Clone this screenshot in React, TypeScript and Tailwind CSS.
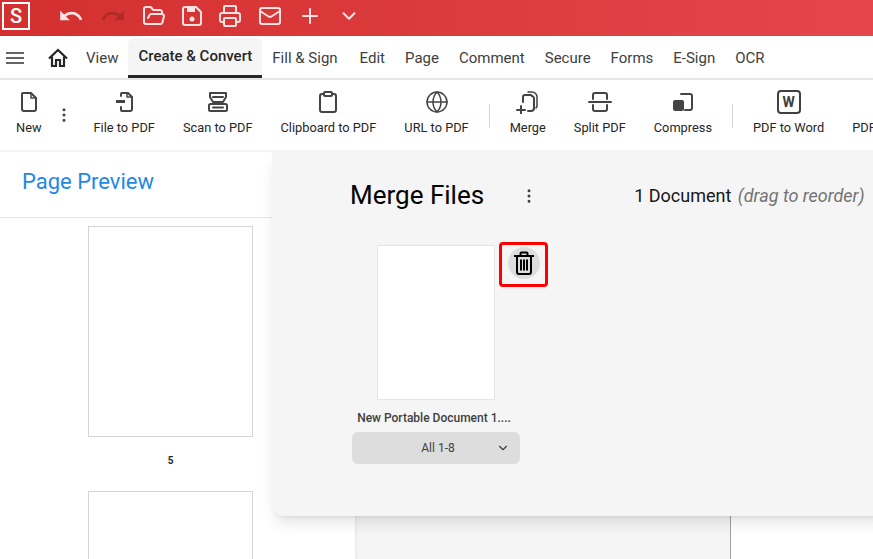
import type { ReactNode } from 'react';
import { ChevronDown, Clipboard, FolderOpen, Globe, Mail, MoreVertical, Plus, Printer } from 'lucide-react';
import { MdRedo, MdUndo } from 'react-icons/md';

const TABS = ['Fill & Sign', 'Edit', 'Page', 'Comment', 'Secure', 'Forms', 'E-Sign', 'OCR'];

function Svg({ children }: { children: ReactNode }) {
  return (
    <svg width="24" height="24" viewBox="0 0 24 24" fill="none" stroke="#444" strokeWidth="2" strokeLinejoin="round" strokeLinecap="round">
      {children}
    </svg>
  );
}

const NewIcon = () => (
  <Svg>
    <path d="M6 3h8l5 5v11a2 2 0 0 1-2 2H7a2 2 0 0 1-2-2V4a1 1 0 0 1 1-1z" />
    <path d="M14 3v5h5" strokeWidth="1.5" />
  </Svg>
);
const FileToPdfIcon = () => (
  <Svg>
    <path d="M9 6V4a1 1 0 0 1 1-1h6l4 4v12a2 2 0 0 1-2 2h-8a1 1 0 0 1-1-1v-3" />
    <path d="M4 11.5h9" strokeWidth="3" strokeLinecap="butt" />
    <path d="M15 3v4h5" strokeWidth="1.5" />
  </Svg>
);
const ScanIcon = () => (
  <Svg>
    <path d="M4 3h16v4l-3 5H7L4 7z" />
    <path d="M7 7h10" />
    <rect x="3" y="14" width="18" height="7" rx="1.5" />
    <path d="M7 17.5h10" />
  </Svg>
);
const MergeIcon = () => (
  <Svg>
    <path d="M7 12V7a2 2 0 0 1 2-2h6l1 1a3 3 0 0 1 2 2v10a3 3 0 0 1-3 3h-3" />
    <path d="M12 2h4a5 5 0 0 1 5 5v9a4 4 0 0 1-1 2" strokeWidth="1.5" />
    <path d="M1 20h8M5 16v8" />
  </Svg>
);
const SplitIcon = () => (
  <Svg>
    <path d="M5 9V5a2 2 0 0 1 2-2h10a2 2 0 0 1 2 2v4" />
    <path d="M1 12h22" />
    <path d="M5 15v4a2 2 0 0 0 2 2h10a2 2 0 0 0 2-2v-4" />
  </Svg>
);
const CompressIcon = () => (
  <Svg>
    <path d="M10 4h9a2 2 0 0 1 2 2v12a2 2 0 0 1-2 2h-5" />
    <rect x="2" y="10" width="11" height="11" rx="2" fill="#444" stroke="none" />
  </Svg>
);
const WordIcon = () => (
  <div className="flex h-6 w-6 items-center justify-center rounded-sm border-2 border-neutral-700 text-sm font-bold leading-none text-neutral-700">
    W
  </div>
);

const SaveIcon = () => (
  <svg width="20" height="20" viewBox="0 0 20 20" fill="none" stroke="currentColor" strokeWidth="2" strokeLinejoin="round">
    <path d="M3 1h11l5 5v11a2 2 0 0 1-2 2H3a2 2 0 0 1-2-2V3a2 2 0 0 1 2-2z" />
    <path d="M5 2h8v4H5z" fill="currentColor" stroke="none" />
    <circle cx="10" cy="13" r="2.5" fill="currentColor" stroke="none" />
  </svg>
);

const HamburgerIcon = () => (
  <svg width="18" height="12" viewBox="0 0 18 12" fill="none" stroke="#333" strokeWidth="1.6">
    <path d="M0 1h18M0 6h18M0 11h18" />
  </svg>
);

const HomeIcon = () => (
  <svg width="20" height="20" viewBox="0 0 20 20" fill="none" stroke="#262626" strokeWidth="2.2" strokeLinejoin="miter">
    <path d="M1 10.5 10 2l9 8.5" />
    <path d="M4 8.5V18h4v-6h4v6h4V8.5" />
  </svg>
);

const TrashIcon = () => (
  <svg width="20" height="24" viewBox="0 0 20 24" fill="none" stroke="#000" strokeWidth="2" strokeLinejoin="round">
    <path d="M0 5h20" />
    <path d="M6.5 5V2.5a1 1 0 0 1 1-1h5a1 1 0 0 1 1 1V5" />
    <path d="M3 5v16a2 2 0 0 0 2 2h10a2 2 0 0 0 2-2V5" />
    <path d="M7 8.5v11M10 8.5v11M13 8.5v11" />
  </svg>
);

function ToolItem({ icon, label }: { icon: ReactNode; label: string }) {
  return (
    <div className="flex shrink-0 flex-col items-center gap-1.5 px-3.5">
      <div className="flex h-6 items-center">{icon}</div>
      <span className="whitespace-nowrap text-[0.8rem] leading-4 text-neutral-800">{label}</span>
    </div>
  );
}

const Separator = () => <div className="mx-1.5 mt-3.5 h-6 w-px shrink-0 bg-neutral-300" />;

export default function App() {
  return (
    <div className="relative flex h-screen w-full flex-col overflow-hidden bg-white font-[family-name:Roboto,sans-serif]">
      {/* title bar */}
      <header className="flex h-9 shrink-0 items-center bg-gradient-to-r from-[#d32f2f] to-[#e5464a] pb-1 text-red-100">
        <div className="ml-0.5 flex h-7 w-7 items-center justify-center border-2 border-white text-xl font-medium text-white">
          S
        </div>
        <div className="ml-7 flex items-center gap-4">
          <MdUndo size={26} />
          <MdRedo size={26} className="text-[#b02a2a]" />
          <FolderOpen size={24} strokeWidth={2} />
          <SaveIcon />
          <Printer size={24} strokeWidth={2} />
          <Mail size={24} strokeWidth={2} />
          <Plus size={24} strokeWidth={2} />
          <ChevronDown size={22} strokeWidth={2.2} />
        </div>
      </header>

      {/* menu tabs */}
      <nav className="flex h-11 shrink-0 items-end border-b-2 border-neutral-200 pt-0.5">
        <div className="flex h-10 items-center pl-1.5">
          <HamburgerIcon />
          <div className="ml-6">
            <HomeIcon />
          </div>
        </div>
        <div className="ml-2 flex h-10 items-center px-2.5 text-[15px] text-neutral-700">View</div>
        <div className="flex h-10 items-center rounded-t-md border-b-[3px] border-neutral-800 bg-neutral-100 px-2.5 text-[15px] font-medium text-neutral-800">
          Create &amp; Convert
        </div>
        <div className="flex">
          {TABS.map((tab) => (
            <div key={tab} className="flex h-10 items-center px-2.5 text-[15px] text-neutral-700 first:pr-3">
              {tab}
            </div>
          ))}
        </div>
      </nav>

      {/* toolbar */}
      <div className="flex h-[72px] shrink-0 items-start border-b-2 border-neutral-100 pl-0.5 pt-2.5">
        <ToolItem icon={<NewIcon />} label="New" />
        <div className="mt-4 flex w-6 shrink-0 justify-center pr-2">
          <MoreVertical size={18} className="shrink-0 text-neutral-700" />
        </div>
        <ToolItem icon={<FileToPdfIcon />} label="File to PDF" />
        <ToolItem icon={<ScanIcon />} label="Scan to PDF" />
        <ToolItem icon={<Clipboard size={24} color="#444" />} label="Clipboard to PDF" />
        <ToolItem icon={<Globe size={24} color="#444" strokeWidth={1.5} />} label="URL to PDF" />
        <Separator />
        <ToolItem icon={<MergeIcon />} label="Merge" />
        <ToolItem icon={<SplitIcon />} label="Split PDF" />
        <ToolItem icon={<CompressIcon />} label="Compress" />
        <Separator />
        <ToolItem icon={<WordIcon />} label="PDF to Word" />
        <ToolItem icon={<NewIcon />} label="PDF to Excel" />
      </div>

      {/* workspace */}
      <main className="flex min-h-0 flex-1">
        <aside className="z-10 w-[355px] shrink-0 bg-white shadow-md">
          <div className="flex h-[66px] items-center border-b border-neutral-200 pb-1.5 pl-[22px] text-[22px] text-[#1e88e5]">
            Page Preview
          </div>
          <div className="flex flex-col pl-[88px] pt-2">
            <div className="h-[211px] w-[165px] border border-neutral-300" />
            <div className="mt-4 w-[165px] text-center text-[10px] font-bold leading-4 text-neutral-800">5</div>
            <div className="mt-[22px] h-[211px] w-[165px] border border-neutral-300" />
          </div>
        </aside>
        <div className="w-[376px] border-r border-neutral-400 bg-neutral-100" />
      </main>

      {/* merge files panel */}
      <section className="absolute -right-5 left-[272px] top-[152px] z-20 h-[364px] rounded-bl-xl bg-neutral-100 pl-20 shadow-lg">
        <div className="-ml-0.5 flex h-[87px] items-center">
          <h2 className="text-[26px] text-black">Merge Files</h2>
          <div className="ml-9 flex w-4.5 justify-center">
            <MoreVertical size={18} className="text-neutral-700" />
          </div>
          <div className="ml-24 whitespace-nowrap text-lg text-neutral-900">
            1 Document <em className="ml-0.5 text-neutral-500">(drag to reorder)</em>
          </div>
        </div>
        <div className="relative flex w-42 flex-col items-center pt-1.5">
          <div className="h-[155px] w-[118px] border border-neutral-200 bg-white" />
          <div className="mt-2 whitespace-nowrap pr-1 text-xs font-medium leading-5 text-neutral-700">New Portable Document 1....</div>
          <div className="relative mt-1 flex h-8 w-full items-center justify-center rounded-md bg-[#ddd] pl-1 text-xs text-neutral-700">
            All 1-8
            <ChevronDown size={14} className="absolute right-2.5" />
          </div>
          {/* highlighted delete button */}
          <div className="absolute left-[147px] top-[3px] flex h-[45px] w-[49px] items-center justify-center rounded-sm border-[3px] border-[#f00] pb-1">
            <div className="flex h-8 w-8 items-center justify-center rounded-full bg-[#ddd]">
              <TrashIcon />
            </div>
          </div>
        </div>
      </section>
    </div>
  );
}
